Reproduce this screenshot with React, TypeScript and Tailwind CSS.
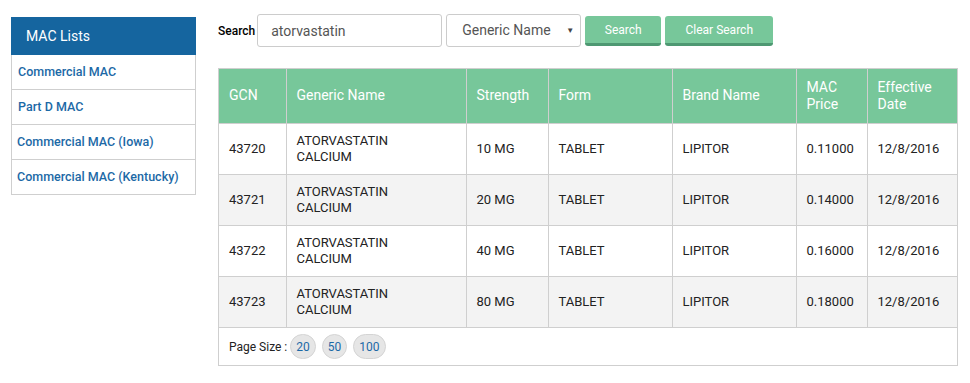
import { useState } from "react";

interface MacRow {
  gcn: string;
  name: string;
  strength: string;
  form: string;
  brand: string;
  price: string;
  date: string;
}

const rows: MacRow[] = [
  { gcn: "43720", name: "ATORVASTATIN CALCIUM", strength: "10 MG", form: "TABLET", brand: "LIPITOR", price: "0.11000", date: "12/8/2016" },
  { gcn: "43721", name: "ATORVASTATIN CALCIUM", strength: "20 MG", form: "TABLET", brand: "LIPITOR", price: "0.14000", date: "12/8/2016" },
  { gcn: "43722", name: "ATORVASTATIN CALCIUM", strength: "40 MG", form: "TABLET", brand: "LIPITOR", price: "0.16000", date: "12/8/2016" },
  { gcn: "43723", name: "ATORVASTATIN CALCIUM", strength: "80 MG", form: "TABLET", brand: "LIPITOR", price: "0.18000", date: "12/8/2016" },
];

const lists = ["Commercial MAC", "Part D MAC", "Commercial MAC (Iowa)", "Commercial MAC (Kentucky)"];

// largeurs des colonnes (bordures comprises)
const cols = [67, 180, 82, 124, 124, 71, 90];

export default function App() {
  const [query, setQuery] = useState("atorvastatin");
  const [field, setField] = useState("Generic Name");

  return (
    <div className="flex min-h-[383px] bg-white pl-[11px] font-['Roboto',sans-serif] text-[12px] text-[#222]">
      {/* Sidebar */}
      <div className="mt-[17px] w-[185px] shrink-0">
        <div className="flex h-[38px] items-center bg-[#15659f] pl-[15px] text-[14px] text-white">MAC Lists</div>
        <div className="border-x border-[#cfcfcf]">
          {lists.map((l, i) => (
            <div
              key={l}
              className={`flex h-[35px] items-center border-b border-[#cfcfcf] text-[12.5px] font-medium text-[#1c69a6] ${i < 2 ? "pl-[6px]" : "pl-[5px]"}`}
            >
              {l}
            </div>
          ))}
        </div>
      </div>

      {/* Main */}
      <div className="ml-[22px] w-[741px] shrink-0">
        <div className="mt-[14px] flex items-center">
          <span className="mr-[2px] text-[12px] font-medium text-black">Search</span>
          <input
            value={query}
            onChange={(e) => setQuery(e.target.value)}
            className="h-[33px] w-[185px] rounded-[3px] border border-[#cccccc] px-[13px] text-[14px] text-[#555] outline-none"
          />
          <div className="relative ml-[4px] h-[33px] w-[135px]">
            <select
              value={field}
              onChange={(e) => setField(e.target.value)}
              className="h-full w-full appearance-none rounded-[3px] border border-[#cccccc] bg-white pl-[15px] text-[14px] text-[#555] outline-none"
            >
              <option>Generic Name</option>
              <option>Brand Name</option>
              <option>GCN</option>
            </select>
            <span className="pointer-events-none absolute right-[7px] top-[11px] text-[8px] text-[#444]">▼</span>
          </div>
          <button className="ml-[4px] mt-[1px] h-[30px] w-[76px] rounded-[3px] border-b-[3px] border-[#4e9872] bg-[#77c79a] text-[12px] text-white">
            Search
          </button>
          <button className="ml-[4px] mt-[1px] h-[30px] w-[108px] rounded-[3px] border-b-[3px] border-[#4e9872] bg-[#77c79a] text-[12px] text-white">
            Clear Search
          </button>
        </div>

        <div className="mt-[21px] w-[740px] border border-[#cfcfcf]">
          <table className="w-full table-fixed border-collapse">
            <colgroup>
              {cols.map((w, i) => (
                <col key={i} style={{ width: w }} />
              ))}
            </colgroup>
            <thead>
              <tr className="h-[54px] bg-[#77c79a] text-left text-[14px] text-white">
                {["GCN", "Generic Name", "Strength", "Form", "Brand Name", "MAC Price", "Effective Date"].map((h, i) => (
                  <th key={h} className={`border-[#cfcfcf] px-[10px] font-normal leading-[17px] ${i > 0 ? "border-l" : ""}`}>
                    {h === "MAC Price" ? (
                      <>MAC<br />Price</>
                    ) : h === "Effective Date" ? (
                      <>Effective<br />Date</>
                    ) : (
                      h
                    )}
                  </th>
                ))}
              </tr>
            </thead>
            <tbody>
              {rows.map((r, idx) => (
                <tr key={r.gcn} className={`h-[51px] border-t border-[#cfcfcf] text-[13px] ${idx % 2 ? "bg-[#f3f3f3]" : "bg-white"}`}>
                  <td className="px-[10px]">{r.gcn}</td>
                  <td className="border-l border-[#cfcfcf] px-[10px] leading-[16px]">
                    ATORVASTATIN<br />CALCIUM
                  </td>
                  <td className="border-l border-[#cfcfcf] px-[10px]">{r.strength}</td>
                  <td className="border-l border-[#cfcfcf] px-[10px]">{r.form}</td>
                  <td className="border-l border-[#cfcfcf] px-[10px]">{r.brand}</td>
                  <td className="border-l border-[#cfcfcf] px-[10px]">{r.price}</td>
                  <td className="border-l border-[#cfcfcf] px-[10px]">{r.date}</td>
                </tr>
              ))}
            </tbody>
          </table>
          <div className="flex h-[38px] items-center border-t border-[#cfcfcf] pl-[10px] text-[12px] text-[#222]">
            <span className="mr-[3px]">Page Size :</span>
            {["20", "50", "100"].map((p) => (
              <span
                key={p}
                className="mr-[6px] flex h-[25px] items-center rounded-full border border-[#d4d4d4] bg-[#e6e6e6] px-[5px] text-[12px] text-[#1c69a6]"
              >
                {p}
              </span>
            ))}
          </div>
        </div>
      </div>
    </div>
  );
}
